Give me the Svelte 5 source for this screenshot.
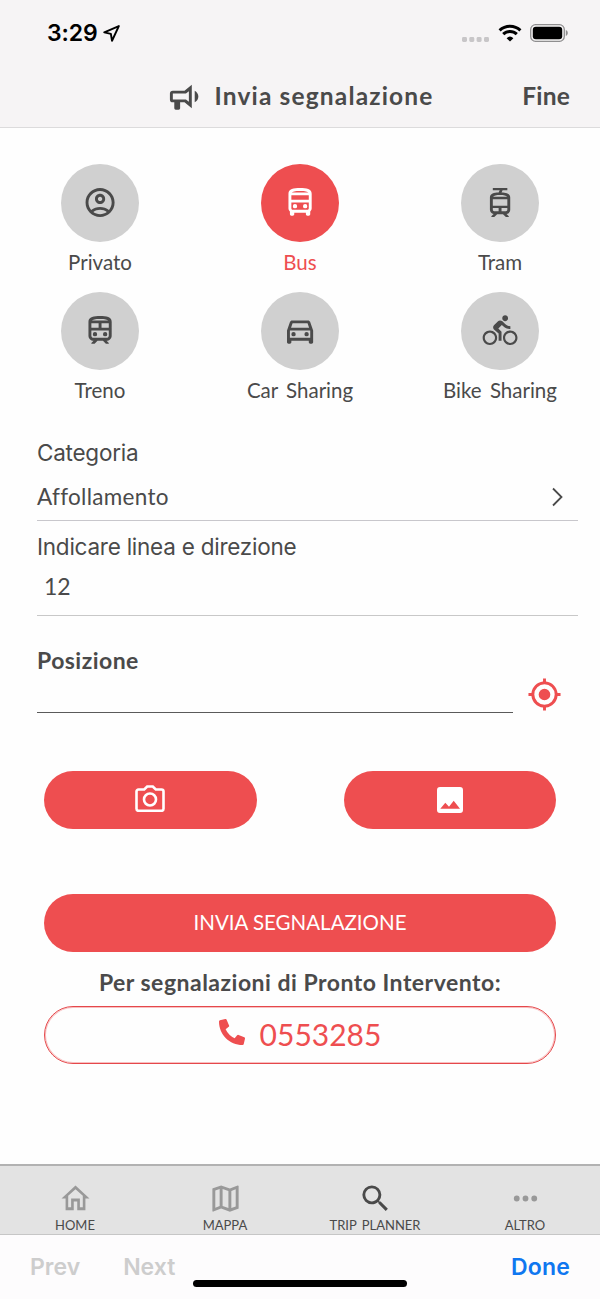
<!--
  Report screen — pick a means of transport, a category and a position,
  attach a picture and send the report.
-->
<script lang="ts">
	const vehicles = [
		{
			id: 'privato',
			label: 'Privato',
			path: 'M12 2C6.48 2 2 6.48 2 12s4.48 10 10 10 10-4.48 10-10S17.52 2 12 2zM7.35 18.5C8.66 17.56 10.26 17 12 17s3.34.56 4.65 1.5C15.34 19.44 13.74 20 12 20s-3.34-.56-4.65-1.5zm10.79-1.38C16.45 15.8 14.32 15 12 15s-4.45.8-6.14 2.12C4.7 15.73 4 13.95 4 12c0-4.42 3.58-8 8-8s8 3.58 8 8c0 1.95-.7 3.73-1.86 5.12zM12 6c-1.93 0-3.5 1.57-3.5 3.5S10.07 13 12 13s3.5-1.57 3.5-3.5S13.93 6 12 6zm0 5c-.83 0-1.5-.67-1.5-1.5S11.17 8 12 8s1.5.67 1.5 1.5S12.83 11 12 11z',
		},
		{
			id: 'bus',
			label: 'Bus',
			path: 'M12 2c-4.42 0-8 .5-8 4v10c0 .88.39 1.67 1 2.22V20c0 .55.45 1 1 1h1c.55 0 1-.45 1-1v-1h8v1c0 .55.45 1 1 1h1c.55 0 1-.45 1-1v-1.78c.61-.55 1-1.34 1-2.22V6c0-3.5-3.58-4-8-4zm5.66 2.99H6.34C6.89 4.46 8.31 4 12 4s5.11.46 5.66.99zm.34 2V10H6V6.99h12zm-.34 9.74-.29.27H6.63l-.29-.27C6.21 16.62 6 16.37 6 16v-4h12v4c0 .37-.21.62-.34.73zM7 14.5a1.5 1.5 0 1 0 3 0a1.5 1.5 0 1 0-3 0zM14 14.5a1.5 1.5 0 1 0 3 0a1.5 1.5 0 1 0-3 0z',
		},
		{
			id: 'tram',
			label: 'Tram',
			path: 'M13 5l.75-1.5H17V2H7v1.5h4.75L11 5c-3.13.09-6 .73-6 3.5V17c0 1.5 1.11 2.73 2.55 2.95L6 21.5v.5h2l2-2h4l2 2h2v-.5l-1.55-1.55C17.89 19.73 19 18.5 19 17V8.5c0-2.77-2.87-3.41-6-3.5zM7.2 8C7.8 7.2 9.4 6.8 12 6.8s4.2.4 4.8 1.2zM7 9.8h10v4.4H7zM7 15.8h4v2.2H8c-.6 0-1-.4-1-1zM13 15.8h4V17c0 .6-.4 1-1 1h-3z',
		},
		{
			id: 'treno',
			label: 'Treno',
			path: 'M12 2c-4 0-8 .5-8 4v9.5C4 17.43 5.57 19 7.5 19L6 20.5v.5h2.23l2-2H14l2 2h2v-.5L16.5 19c1.93 0 3.5-1.57 3.5-3.5V6c0-3.5-3.58-4-8-4zm0 2c3.51 0 4.96.48 5.57 1H6.43c.61-.52 2.06-1 5.57-1zM6 7h5v3H6V7zm12 8.5c0 .83-.67 1.5-1.5 1.5h-9c-.83 0-1.5-.67-1.5-1.5V12h12v3.5zm0-5.5h-5V7h5v3zM7 14.5a1.5 1.5 0 1 0 3 0a1.5 1.5 0 1 0-3 0zM14 14.5a1.5 1.5 0 1 0 3 0a1.5 1.5 0 1 0-3 0z',
		},
		{
			id: 'car',
			label: 'Car Sharing',
			path: 'M18.92 6.01C18.72 5.42 18.16 5 17.5 5h-11c-.66 0-1.21.42-1.42 1.01L3 12v8c0 .55.45 1 1 1h1c.55 0 1-.45 1-1v-1h12v1c0 .55.45 1 1 1h1c.55 0 1-.45 1-1v-8l-2.08-5.99zM6.85 7h10.29l1.08 3.11H5.77L6.85 7zM19 17H5v-5h14v5zM6 14.5a1.5 1.5 0 1 0 3 0a1.5 1.5 0 1 0-3 0zM15 14.5a1.5 1.5 0 1 0 3 0a1.5 1.5 0 1 0-3 0z',
		},
		{
			id: 'bike',
			label: 'Bike Sharing',
			path: 'M15.5 5.5c1.1 0 2-.9 2-2s-.9-2-2-2-2 .9-2 2 .9 2 2 2zM5 12c-2.8 0-5 2.2-5 5s2.2 5 5 5 5-2.2 5-5-2.2-5-5-5zm0 8.5c-1.9 0-3.5-1.6-3.5-3.5s1.6-3.5 3.5-3.5 3.5 1.6 3.5 3.5-1.6 3.5-3.5 3.5zm5.8-10l2.4-2.4.8.8c1.3 1.3 3 2.1 5.1 2.1V9c-1.5 0-2.7-.6-3.6-1.5l-1.9-1.9c-.5-.4-1-.6-1.6-.6s-1.1.2-1.4.6L7.8 8.4c-.4.4-.6.9-.6 1.4 0 .6.2 1.1.6 1.4L11 14v5h2v-6.2l-2.2-2.3zM19 12c-2.8 0-5 2.2-5 5s2.2 5 5 5 5-2.2 5-5-2.2-5-5-5zm0 8.5c-1.9 0-3.5-1.6-3.5-3.5s1.6-3.5 3.5-3.5 3.5 1.6 3.5 3.5-1.6 3.5-3.5 3.5z',
		},
	];

	const tabs = [
		{
			label: 'HOME',
			path: 'M12 5.69l5 4.5V18h-2v-6H9v6H7v-7.81l5-4.5M12 3L2.4 12h2.8v8h5.6v-6h2.4v6h5.6v-8h2.8L12 3z',
		},
		{
			label: 'MAPPA',
			path: 'M20.5 3l-.16.03L15 5.1 9 3 3.36 4.9c-.21.07-.36.25-.36.48V20.5c0 .28.22.5.5.5l.16-.03L9 18.9l6 2.1 5.64-1.9c.21-.07.36-.25.36-.48V3.5c0-.28-.22-.5-.5-.5zM10 5.47l4 1.4v11.66l-4-1.4V5.47zm-5 .99l3-1.01v11.7l-3 1.16V6.46zm14 11.08l-3 1.01V6.86l3-1.16v11.84z',
		},
		{
			label: 'TRIP PLANNER',
			active: true,
			path: 'M15.5 14h-.79l-.28-.27A6.471 6.471 0 0 0 16 9.5 6.5 6.5 0 1 0 9.5 16c1.61 0 3.09-.59 4.23-1.57l.27.28v.79l5 4.99L20.49 19l-4.99-5zm-6 0C7.01 14 5 11.99 5 9.5S7.01 5 9.5 5 14 7.01 14 9.5 11.99 14 9.5 14z',
		},
		{
			label: 'ALTRO',
			path: 'M4 12a2 2 0 1 0 4 0a2 2 0 1 0-4 0zM10 12a2 2 0 1 0 4 0a2 2 0 1 0-4 0zM16 12a2 2 0 1 0 4 0a2 2 0 1 0-4 0z',
		},
	];

	let selected = $state('bus');
</script>

<div class="screen">
	<header>
		<div class="status">
			<span class="time">3:29</span>
			<svg class="arrow" viewBox="0 0 16 16">
				<path d="M14.9 1 1.2 6.9l6.2 1.5 1.1 6.400z" />
			</svg>
			<svg class="signal" viewBox="0 0 27 5">
				<rect width="5" height="5" rx="1.4" />
				<rect x="7.3" width="5" height="5" rx="1.4" />
				<rect x="14.6" width="5" height="5" rx="1.4" />
				<rect x="22" width="5" height="5" rx="1.4" />
			</svg>
			<svg class="wifi" viewBox="0 0 24 18">
				<path d="M1.6 6.4a15 15 0 0 1 20.8 0M5.2 10.2a9.8 9.8 0 0 1 13.6 0" />
				<path class="solid" d="M12 17.6l3.4-3.4a5 5 0 0 0-6.8 0z" />
			</svg>
			<svg class="battery" viewBox="0 0 38 18">
				<rect class="case" x=".7" y=".7" width="33.6" height="16.6" rx="4.8" />
				<rect x="2.8" y="2.8" width="29.4" height="12.4" rx="3" />
				<path class="cap" d="M35.8 6v6c1.2-.4 2-1.6 2-3s-.8-2.6-2-3z" />
			</svg>
		</div>
		<div class="titlebar">
			<span class="side"></span>
			<div class="title">
				<svg viewBox="0 0 24 24">
					<path d="M12 8H4a2 2 0 0 0-2 2v4a2 2 0 0 0 2 2h1v4a1 1 0 0 0 1 1h2a1 1 0 0 0 1-1v-4h3l5 4V4l-5 4m3 7.6L13 14H4v-4h9l2-1.6v7.2M21.5 12c0 1.71-.96 3.26-2.5 4V8c1.53.75 2.5 2.3 2.5 4z" />
				</svg>
				<h1>Invia segnalazione</h1>
			</div>
			<button class="side fine">Fine</button>
		</div>
	</header>

	<main>
		<div class="vehicles">
			{#each vehicles as vehicle}
				<button class="vehicle" class:selected={selected === vehicle.id} onclick={() => (selected = vehicle.id)}>
					<span class="disc">
						<svg viewBox="-.45 -.1 24.8 24.8"><path d={vehicle.path} /></svg>
					</span>
					<span class="name">{vehicle.label}</span>
				</button>
			{/each}
		</div>

		<section class="form">
			<div class="label categoria">Categoria</div>
			<div class="select">
				<span>Affollamento</span>
				<svg viewBox="0 0 11 20"><path d="M1 1.5 9.5 10 1 18.5" /></svg>
			</div>
			<div class="label linea">Indicare linea e direzione</div>
			<div class="field">12</div>
			<div class="label posizione">Posizione</div>
			<div class="position">
				<div class="blank"></div>
				<svg viewBox="0 0 24 24">
					<path d="M12 8a4 4 0 1 1 0 8 4 4 0 0 1 0-8zM3.05 13H1v-2h2.05C3.5 6.83 6.83 3.5 11 3.05V1h2v2.05c4.17.45 7.5 3.78 7.95 7.95H23v2h-2.05c-.45 4.17-3.78 7.5-7.95 7.95V23h-2v-2.05C6.83 20.5 3.5 17.17 3.05 13zM12 5a7 7 0 1 0 0 14 7 7 0 0 0 0-14z" />
				</svg>
			</div>
		</section>

		<section class="actions">
			<div class="attach">
				<button class="pill" aria-label="Fotocamera">
					<svg class="camera" viewBox="0 0 30 27">
						<path d="M3.5 4.5h5.7l3-3h5.6l3 3h5.7a2 2 0 0 1 2 2v17.3a2 2 0 0 1-2 2h-23a2 2 0 0 1-2-2V6.500a2 2 0 0 1 2-2z" />
						<circle cx="15" cy="14.5" r="6" />
					</svg>
				</button>
				<button class="pill" aria-label="Galleria">
					<svg class="gallery" viewBox="0 0 26 26">
						<path d="M3 0h20a3 3 0 0 1 3 3v20a3 3 0 0 1-3 3H3a3 3 0 0 1-3-3V3a3 3 0 0 1 3-3zM3.3 21.7H23l-6.3-8-4.7 6-3.7-4z" />
					</svg>
				</button>
			</div>
			<button class="pill send">INVIA SEGNALAZIONE</button>
			<p>Per segnalazioni di Pronto Intervento:</p>
			<button class="pill call">
				<svg viewBox="0 0 512 512">
					<path d="M497.39 361.8l-112-48a24 24 0 0 0-28 6.9l-49.6 60.6A370.66 370.66 0 0 1 130.6 204.11l60.6-49.6a23.94 23.94 0 0 0 6.9-28l-48-112A24.16 24.16 0 0 0 122.6.61l-104 24A24 24 0 0 0 0 48c0 256.5 207.9 464 464 464a24 24 0 0 0 23.4-18.6l24-104a24.29 24.29 0 0 0-14.01-27.6z" />
				</svg>
				<span>0553285</span>
			</button>
		</section>
	</main>

	<nav>
		{#each tabs as tab}
			<div class="tab" class:active={tab.active}>
				<svg viewBox="0 0 24 24"><path d={tab.path} /></svg>
				<span>{tab.label}</span>
			</div>
		{/each}
	</nav>

	<footer>
		<span class="prev">Prev</span>
		<span class="next">Next</span>
		<span class="done">Done</span>
		<div class="indicator"></div>
	</footer>
</div>

<style>
	:global(body) {
		background: #fff;
	}

	.screen {
		display: flex;
		flex-direction: column;
		width: 600px;
		height: 1299px;
		overflow: hidden;
		background: #fefefe;
		color: #4a4a4a;
		font-family: Lato, sans-serif;
		font-variant-ligatures: none;
	}

	.screen * {
		box-sizing: border-box;
	}

	button {
		padding: 0;
		border: 0;
		background: none;
		color: inherit;
		font: inherit;
	}

	svg {
		display: block;
		flex: none;
		fill: currentColor;
		fill-rule: evenodd;
	}

	/* Status bar and title */
	header {
		height: 128px;
		border-bottom: 1px solid #dcdbdc;
		background: #f6f4f5;
	}

	.status {
		display: flex;
		align-items: center;
		height: 66px;
		padding: 0 32px 0 47px;
		color: #000;
	}

	.time {
		font: 600 23px/28px Inter, sans-serif;
		letter-spacing: -0.1px;
	}

	.arrow {
		width: 17px;
		height: 17px;
		margin-left: 5px;
		fill: none;
		stroke: #000;
		stroke-width: 1.8;
		stroke-linejoin: round;
	}

	.signal {
		width: 27px;
		height: 5px;
		margin: 12px 9px 0 auto;
		fill: #c8c6c8;
	}

	.wifi {
		width: 24px;
		height: 18px;
		margin-right: 8px;
		fill: none;
		stroke: #000;
		stroke-width: 3;
	}

	.wifi .solid {
		fill: #000;
		stroke: none;
	}

	.battery {
		width: 38px;
		height: 18px;
	}

	.battery .case {
		fill: none;
		stroke: #8f8e8f;
		stroke-width: 1.3;
	}

	.battery .cap {
		fill: #8f8e8f;
	}

	.titlebar {
		display: flex;
		align-items: center;
		height: 60px;
		padding: 0 30px;
	}

	.side {
		width: 80px;
	}

	.title {
		display: flex;
		flex: 1;
		align-items: center;
		justify-content: center;
	}

	.title svg {
		width: 35px;
		height: 35px;
		margin-right: 13px;
	}

	h1,
	.fine {
		margin: 0;
		font-size: 24.5px;
		font-weight: 700;
		line-height: 30px;
	}

	h1 {
		letter-spacing: 1.15px;
	}

	.fine {
		letter-spacing: 0.2px;
		text-align: right;
	}

	main {
		flex: 1;
		padding-top: 36px;
	}

	/* Transport picker */
	.vehicles {
		display: grid;
		grid-template-columns: repeat(3, 200px);
		row-gap: 16px;
	}

	.vehicle {
		display: flex;
		flex-direction: column;
		align-items: center;
	}

	.disc {
		display: grid;
		place-items: center;
		width: 78px;
		height: 78px;
		border-radius: 50%;
		background: #d0d0d0;
	}

	.disc svg {
		width: 36px;
		height: 36px;
	}

	.name {
		margin: 7px 0 1px;
		font-size: 20.5px;
		line-height: 26px;
		word-spacing: 3px;
	}

	.selected {
		color: #ee4e50;
	}

	.selected .disc {
		background: #ee4e50;
		color: #fff;
	}

	/* Form rows */
	.form {
		padding: 34px 22px 0 37px;
	}

	.label {
		font: 400 22.5px/29px Inter, sans-serif;
		letter-spacing: -0.24px;
	}

	.select {
		display: flex;
		align-items: center;
		justify-content: space-between;
		height: 46px;
		margin-top: 8px;
		padding: 0 15px 2px 0;
		border-bottom: 1px solid #c8c7cc;
		font-size: 22.5px;
		letter-spacing: 0.3px;
	}

	.select svg {
		width: 11px;
		height: 20px;
		fill: none;
		stroke: currentColor;
		stroke-width: 1.8;
	}

	.linea {
		margin-top: 11px;
	}

	.field {
		height: 55px;
		padding: 11px 0 0 7px;
		border-bottom: 1px solid #c8c8c8;
		font-size: 23px;
		line-height: 28px;
	}

	.posizione {
		margin-top: 30px;
		font: 700 23px/29px Lato, sans-serif;
		letter-spacing: 0.45px;
	}

	.position {
		display: flex;
		height: 38px;
		gap: 14px;
	}

	.blank {
		width: 476px;
		border-bottom: 1px solid #5a5a5a;
	}

	.position svg {
		width: 35px;
		height: 35px;
		margin-top: 2px;
		color: #ee4e50;
	}

	/* Buttons */
	.actions {
		padding: 58px 44px 0;
	}

	.attach {
		display: flex;
		justify-content: space-between;
	}

	.pill {
		display: flex;
		align-items: center;
		justify-content: center;
		width: 100%;
		height: 58px;
		border-radius: 29px;
		background: #ee4e50;
		color: #fff;
	}

	.attach .pill {
		width: 212.5px;
	}

	.camera {
		width: 30px;
		height: 27px;
		margin-bottom: 3px;
		fill: none;
		stroke: #fff;
		stroke-width: 2.6;
	}

	.gallery {
		width: 26px;
		height: 26px;
	}

	.send {
		margin-top: 65px;
		padding-bottom: 2px;
		font-size: 20.5px;
	}

	p {
		margin: 16px 0 10px;
		font-size: 23px;
		font-weight: 700;
		letter-spacing: 0.49px;
		line-height: 28px;
		text-align: center;
	}

	.call {
		gap: 15px;
		padding-bottom: 2px;
		border: 1px solid #e5484b;
		background: none;
		box-shadow: inset 0 0 0 1px rgba(238, 78, 80, 0.35);
		color: #ee4e50;
		font-size: 30px;
	}

	.call svg {
		width: 26px;
		height: 26px;
		margin-bottom: 4px;
	}

	/* Tab bar */
	nav {
		display: grid;
		grid-template-columns: repeat(4, 1fr);
		height: 71px;
		border-top: 2px solid #b2b2b2;
		border-bottom: 1px solid #c6c6c6;
		background: #e3e3e3;
	}

	.tab {
		display: flex;
		flex-direction: column;
		align-items: center;
		padding-top: 15px;
		font-size: 13px;
		line-height: 18px;
		word-spacing: 2px;
	}

	.tab svg {
		width: 35px;
		height: 35px;
		color: #999;
	}

	.tab.active svg {
		color: #4a4a4a;
	}

	/* Keyboard accessory */
	footer {
		position: relative;
		display: flex;
		height: 64px;
		padding: 17px 30px 0;
		background: #fdfcfd;
		color: #cdcdcd;
		font: 600 23px/30px Inter, sans-serif;
	}

	.next {
		margin-left: 43px;
	}

	.done {
		margin-left: auto;
		color: #0f77f0;
		letter-spacing: 0.2px;
	}

	.indicator {
		position: absolute;
		left: 193px;
		bottom: 12px;
		width: 214px;
		height: 7px;
		border-radius: 4px;
		background: #000;
	}
</style>
